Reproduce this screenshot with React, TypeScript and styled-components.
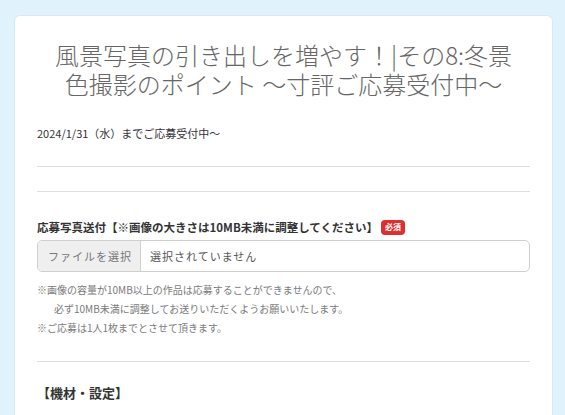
import styled, { createGlobalStyle } from "styled-components";

const GlobalStyle = createGlobalStyle`
  html, body {
    margin: 0;
    padding: 0;
    background: #e0f3fc;
  }
  body {
    font-family: "Noto Sans CJK JP", "Noto Sans", sans-serif;
    color: #333;
  }
`;

const Page = styled.div`
  padding: 15px 12px 0 14px;
  height: 415px;
  overflow: hidden;
  box-sizing: border-box;
`;

const Card = styled.div`
  background: #fff;
  border: 1px solid #d3ebf6;
  border-bottom: none;
  border-radius: 6px 6px 0 0;
  padding: 24px 22px 40px;
  min-height: 420px;
  box-sizing: border-box;
`;

const Title = styled.h1`
  margin: 0;
  padding: 0 14px;
  text-align: center;
  font-size: 24px;
  font-weight: 300;
  line-height: 29px;
  color: #666;
`;

const Lead = styled.p`
  margin: 26px 0 0;
  font-size: 11px;
  line-height: 18px;
  color: #333;
`;

const Divider = styled.hr<{ $gap?: number }>`
  margin: ${(p) => p.$gap ?? 24}px 0 0;
  border: none;
  border-top: 1px solid #dedede;
`;

const Field = styled.div`
  margin-top: 26px;
`;

const Label = styled.div`
  display: flex;
  align-items: center;
  gap: 3px;
  font-size: 11.5px;
  font-weight: 700;
  line-height: 18px;
  color: #333;
`;

const Required = styled.span`
  display: inline-flex;
  align-items: center;
  justify-content: center;
  width: 24px;
  height: 15px;
  border-radius: 4px;
  background: #dc2f2f;
  color: #fff;
  font-size: 8px;
  font-weight: 700;
  line-height: 1;
`;

const FileBox = styled.div`
  display: flex;
  margin-top: 4px;
  height: 32px;
  border: 1px solid #cfcfcf;
  border-radius: 5px;
  overflow: hidden;
  box-sizing: border-box;
`;

const FileButton = styled.div`
  display: flex;
  align-items: center;
  width: 103px;
  padding-left: 10px;
  background: #efefef;
  border-right: 1px solid #cfcfcf;
  font-size: 11px;
  letter-spacing: 1px;
  color: #777;
  box-sizing: border-box;
`;

const FileName = styled.div`
  display: flex;
  align-items: center;
  padding-left: 9px;
  font-size: 11px;
  letter-spacing: 1px;
  color: #555;
`;

const Notes = styled.div`
  margin-top: 8px;
`;

const Note = styled.div<{ $indent?: boolean }>`
  font-size: 10px;
  line-height: 19px;
  color: #7a7a7a;
  padding-left: ${(p) => (p.$indent ? "17px" : "0")};
`;

const SectionHeading = styled.h2`
  margin: 21px 0 0;
  font-size: 13px;
  font-weight: 700;
  line-height: 20px;
  color: #333;
`;

export default function App() {
  return (
    <>
      <GlobalStyle />
      <Page>
        <Card>
          <Title>
            風景写真の引き出しを増やす！|その8:冬景色撮影のポイント 〜寸評ご応募受付中〜
          </Title>
          <Lead>2024/1/31（水）までご応募受付中〜</Lead>
          <Divider />
          <Divider />
          <Field>
            <Label>
              応募写真送付【※画像の大きさは10MB未満に調整してください】
              <Required>必須</Required>
            </Label>
            <FileBox>
              <FileButton>ファイルを選択</FileButton>
              <FileName>選択されていません</FileName>
            </FileBox>
            <Notes>
              <Note>※画像の容量が10MB以上の作品は応募することができませんので、</Note>
              <Note $indent>必ず10MB未満に調整してお送りいただくようお願いいたします。</Note>
              <Note>※ご応募は1人1枚までとさせて頂きます。</Note>
            </Notes>
          </Field>
          <Divider />
          <SectionHeading>【機材・設定】</SectionHeading>
        </Card>
      </Page>
    </>
  );
}
